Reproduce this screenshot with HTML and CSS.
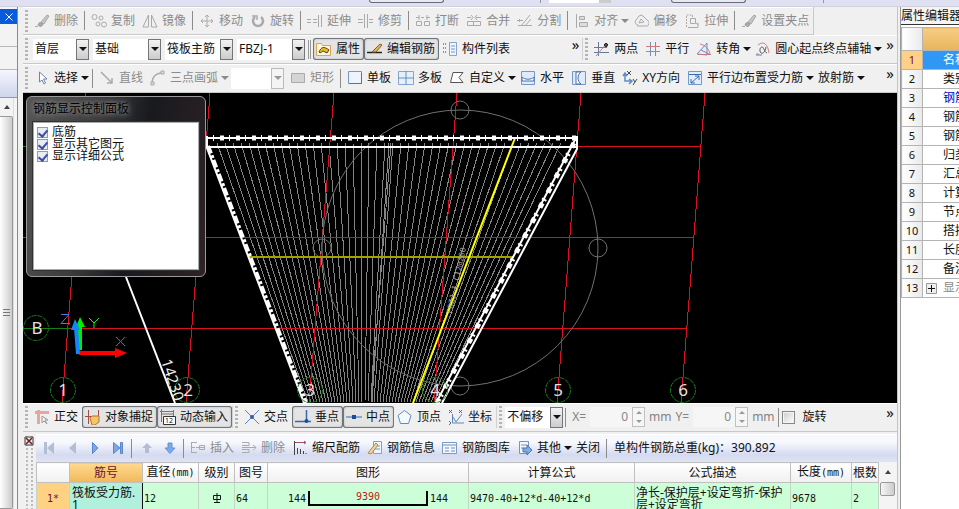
FILE: index.html
```html
<!DOCTYPE html>
<html lang="zh-CN">
<head>
<meta charset="utf-8">
<title>钢筋编辑</title>
<link rel="stylesheet" href="styles.css">
</head>
<body>
<svg class="sprite" aria-hidden="true">
  <symbol id="brush" viewBox="0 0 16 16"><path d="M1 13.500h3M7 9l6-7 2 1-5 8z" fill="#c4c4c4" stroke="#aaa"/><path d="M4 12c1-3 3-3 5-1-1 3-3 3-5 1z" fill="#aaa" stroke="#999"/></symbol>
  <symbol id="copy" viewBox="0 0 16 16"><circle cx="3.500" cy="4" r="2.500"/><circle cx="10" cy="5" r="2"/><circle cx="7" cy="11" r="2"/><circle cx="13" cy="11.500" r="2.500"/></symbol>
  <symbol id="mirror" viewBox="0 0 16 16"><path d="M6.500 2v12H1zM9.500 2v12H15z"/></symbol>
  <symbol id="move" viewBox="0 0 16 16"><path d="M8 2v12M2 8h12M6 4l2-2 2 2M6 12l2 2 2-2M4 6L2 8l2 2M12 6l2 2-2 2"/></symbol>
  <symbol id="rotate" viewBox="0 0 16 16"><path d="M11 4a5 5 0 1 1-6 0" stroke-width="2.500"/><path d="M2 3h5v4" stroke-width="1.500"/></symbol>
  <symbol id="extend" viewBox="0 0 16 16"><path d="M0 6.500h4M0 9.500h4M6 6.500h4M6 9.500h4M11.500 2v12M14.500 2v12"/></symbol>
  <symbol id="trim" viewBox="0 0 16 16"><path d="M0 6.500h5M0 9.500h5M11 6.500h4M11 9.500h4M6.500 1v14M9.500 1v14"/></symbol>
  <symbol id="break" viewBox="0 0 16 16"><path d="M1 4.500h3M6 4.500h3M11 4.500h4M1.500 8.500h5v4h-5zM9.500 8.500h5v4h-5zM4 2v5M12 2v5"/></symbol>
  <symbol id="merge" viewBox="0 0 16 16"><path d="M1 4.500h4M10 4.500h5M1.500 8.500h6v4h-6zM7.500 8.500h7v4h-7zM5 2l2 2.500L5 7M11 2L9 4.500 11 7"/></symbol>
  <symbol id="split" viewBox="0 0 16 16"><path d="M0 7.500h6M1 12.500h14M4 13l9-11M8 13l6-7M2.500 6v3"/></symbol>
  <symbol id="align" viewBox="0 0 16 16"><path d="M2.500 1v14M5.500 3.500h5v3h-5zM5.500 9.500h8v4h-8z" fill="#ddd"/></symbol>
  <symbol id="offset" viewBox="0 0 16 16"><path d="M5 12a3 3 0 0 1-2-5l3-4a3 3 0 0 1 4 0l4 4a3 3 0 0 1-2 6H4M6 10l2-4 3 3z"/></symbol>
  <symbol id="stretch" viewBox="0 0 16 16"><path d="M2.500 14V2h6v3" stroke-dasharray="2 1"/><path d="M4 14.500h10v-5M6.500 5.500h5v5h-5zM12 10l2 2"/></symbol>
  <symbol id="props" viewBox="0 0 16 16"><path d="M.5 2.500h5l1 2h8v10H.5z" fill="#fff7df" stroke="#e0a24d"/><path d="M3 11c2-5 5-6 10-2l-2 3-4-2-3 2z" fill="#e8ba26" stroke="#514421"/></symbol>
  <symbol id="pen" viewBox="0 0 16 16"><path d="M0 11.500h15" stroke="#222" stroke-width="1.500"/><path d="M5 11l8-8 2 1-6 7z" fill="#e5b64e" stroke="#7c6328"/></symbol>
  <symbol id="list" viewBox="0 0 16 16"><path d="M1 3h4M1 7h4M1 11h4" stroke="#7599c5" stroke-width="2" stroke-dasharray="1 1"/><path d="M7.500 1.500h7v13h-7z" fill="#edf5ff" stroke="#88a4ca"/><path d="M9 5h4M9 8h4M9 11h4" stroke="#7599c5"/></symbol>
  <symbol id="twopt" viewBox="0 0 16 16"><path d="M4.500 1v14M0 11.500h15M0 6.500h13" stroke="#66789a"/><path d="M2 15L13 2" stroke="#c2868e"/><circle cx="12" cy="4" r="1.500" fill="#596b8d"/></symbol>
  <symbol id="parallel" viewBox="0 0 16 16"><path d="M5.500 1v14M10.500 1v14" stroke="#758db8"/><path d="M1 5.500h14M1 10.500h14" stroke="#cb777b"/></symbol>
  <symbol id="angle" viewBox="0 0 16 16"><path d="M1 13L11 2v12zM5 9l8 4" fill="#e6ebfa" stroke="#748abc"/><path d="M4 3c5 1 9 5 10 10M2 13.500h13" stroke="#c97986"/></symbol>
  <symbol id="arcaxis" viewBox="0 0 16 16"><path d="M3 4c6-5 10 0 11 8M1 13h3" stroke="#d27d82"/><path d="M11 6c-1 5-3 7-5 6-2-2-1-6 1-6s2 5 5 6" stroke="#555"/><path d="M1 14h6" stroke="#6482ae"/></symbol>
  <symbol id="cursor" viewBox="0 0 16 16"><path d="M5.500 2v10l2.500-2 2 4 1.500-1-2-4H13z" fill="#fff" stroke="#7182ab"/></symbol>
  <symbol id="line" viewBox="0 0 16 16"><path d="M2 2l11 11M13 8v5H8" stroke-width="1.500"/></symbol>
  <symbol id="arc" viewBox="0 0 16 16"><path d="M2 14C2 7 6 3 12 3" stroke-width="1.500"/><path d="M1 12h3v3H1zM11 1h3v3h-3z" fill="#ddd"/></symbol>
  <symbol id="rect" viewBox="0 0 16 16"><path d="M1.500 3.500h13v9h-13z" fill="#d4d4d4"/></symbol>
  <symbol id="slab" viewBox="0 0 16 16"><path d="M1.500 1.500h13v12h-13z" fill="#edf4ff" stroke="#7796ca"/><path d="M2 13.500h12.500V3" stroke="#4c74b4"/></symbol>
  <symbol id="slabs" viewBox="0 0 16 16"><path d="M.5 1.500h15v13H.5z" fill="#e6f0fd" stroke="#86a6d2"/><path d="M8 1v14M0 8h16" stroke="#668fbd"/></symbol>
  <symbol id="custom" viewBox="0 0 16 16"><path d="M4 2.500h10l-4 5 4 5H1.500z" fill="#fff" stroke="#555"/></symbol>
  <symbol id="horiz" viewBox="0 0 16 16"><path d="M1.500 1.500h13v13h-13z" fill="#dfebfb" stroke="#7299cb"/><path d="M2 7c3 3 9 3 12 0v4H2z" fill="#fff" stroke="#496ea8"/></symbol>
  <symbol id="vert" viewBox="0 0 16 16"><path d="M1.500 1.500h13v13h-13z" fill="#dfebfb" stroke="#7299cb"/><path d="M10 2c-4 3-4 9 0 12H5V2z" fill="#fff" stroke="#496ea8"/></symbol>
  <symbol id="xy" viewBox="0 0 16 16"><path d="M3 4v7h6M1 6l2-3 2 3M7 9l3 2-3 3" stroke="#598bd0" stroke-width="1.500"/><path d="M5 1l4 4M9 1L5 5M11 9l2 3 2-3M13 12l-2 3" stroke="#444"/></symbol>
  <symbol id="edge" viewBox="0 0 16 16"><path d="M1.500 1.500h13v13h-13z" fill="#e2edfc" stroke="#7299cb"/><path d="M2 4.500h12M4 13L12 6M4 9v4h4M8 6h4v4" stroke="#3c69aa"/></symbol>
  <symbol id="ortho" viewBox="0 0 16 16"><path d="M1 3.500h14M4.500 1v14" stroke="#e8a5a5" stroke-width="3"/><path d="M8 7v7l2-2 3 3-2-4h3z" fill="#eee" stroke="#999"/></symbol>
  <symbol id="snap" viewBox="0 0 16 16"><path d="M3.500 1v14M13.500 1v7M0 7.500h7" stroke="#a64a4a"/><path d="M5 9l2-2h7v6l-4 3H7z" fill="#f2c567" stroke="#ae7733"/></symbol>
  <symbol id="dynin" viewBox="0 0 16 16"><path d="M0 2.500h14M1.500 0v13M13.500 1v6M1 5h13" stroke="#777"/><path d="M3.500 7.500h12v8h-12z" fill="#fff" stroke="#333"/><text x="5" y="14" font-size="7" fill="#111" stroke="none">12</text></symbol>
  <symbol id="cross" viewBox="0 0 16 16"><path d="M1 1l14 14M15 1L1 15" stroke="#5d87c0"/><circle cx="8" cy="8" r="2" fill="#365f9d" stroke="none"/></symbol>
  <symbol id="perp" viewBox="0 0 16 16"><path d="M0 12.500h16M11.500 1v11" stroke="#356ab3" stroke-width="1.500"/><circle cx="11.500" cy="12" r="2" fill="#174e9b" stroke="none"/></symbol>
  <symbol id="mid" viewBox="0 0 16 16"><path d="M0 8h16" stroke="#356ab3"/><path d="M6 6h4v4H6z" fill="#174e9b" stroke="none"/></symbol>
  <symbol id="vertex" viewBox="0 0 16 16"><path d="M7.500 1.500l6.500 5-2.500 8h-8l-2.500-8z" fill="#f5faff" stroke="#5a8bca"/></symbol>
  <symbol id="coord" viewBox="0 0 16 16"><path d="M4.500 5v9H16M5 8l3 5 6-8" stroke="#5d87c0"/><path d="M1 1l3 3M4 1L1 4M11 1l3 3M14 1l-3 3M1 12l2 2-2 2" stroke="#666"/></symbol>
  <symbol id="insert" viewBox="0 0 16 16"><path d="M1 2.500h6M1 7.500h4M1 12.500h6M1.500 2v11M6 7.500h9M9.500 5.500h5v4h-5z"/></symbol>
  <symbol id="remove" viewBox="0 0 16 16"><path d="M1 2.500h7v3H1M1 12.500h7v-3H1M1 7.500h14M12 5l3 2.500-3 3"/></symbol>
  <symbol id="scale" viewBox="0 0 16 16"><path d="M3 2.500h11M12 1l2 1.500L12 4" stroke="#a05262"/><path d="M2.500 1v14M5.500 8v6M8.500 9v5M11.500 11v3M14 13v1" stroke="#444"/></symbol>
  <symbol id="info" viewBox="0 0 16 16"><path d="M6.500 1.500h8v12h-8z" fill="#edf5ff" stroke="#8b9fbe"/><path d="M8 6h5M8 9h5" stroke="#7d97bd"/><path d="M1 13L9 3l2 2-7 9z" fill="#f1d699" stroke="#a98c50"/></symbol>
  <symbol id="gallery" viewBox="0 0 16 16"><path d="M.5 2.500h14v11H.5z" fill="#f3f8ff" stroke="#7b9ac4"/><path d="M1 5h13M3 8h4M9 8h4M3 11h4M9 11h4" stroke="#708eb9"/></symbol>
  <symbol id="other" viewBox="0 0 16 16"><path d="M2.500 1.500h9v12h-9z" fill="#f3f8ff" stroke="#7892b8"/><path d="M4 5h6M4 8h3" stroke="#7892b8"/><path d="M6 8h4V5l5 5-5 5v-3H6z" fill="#80abe5" stroke="#4774b2"/></symbol>
  <symbol id="first" viewBox="0 0 16 16"><path d="M3 2h3v12H3zM13 2v12L6 8z" fill="#b2bed5" stroke="none"/></symbol>
  <symbol id="prev" viewBox="0 0 16 16"><path d="M12 2v12L5 8z" fill="#b2bed5" stroke="none"/></symbol>
  <symbol id="next" viewBox="0 0 16 16"><path d="M5.500 2.500v11L11 8z" fill="#7aa7ed" stroke="#5a85cf"/></symbol>
  <symbol id="last" viewBox="0 0 16 16"><path d="M3.500 2.500v11L10 8zM10.500 2.500h2v11h-2z" fill="#7aa7ed" stroke="#5a85cf"/></symbol>
  <symbol id="up" viewBox="0 0 16 16"><path d="M8 3l5 5h-3v5H6V8H3z" fill="#b2bed5" stroke="none"/></symbol>
  <symbol id="down" viewBox="0 0 16 16"><path d="M8 13.500L3 8h3V3h4v5h3z" fill="#7aa7ed" stroke="#6890d6"/></symbol>
</svg>

<header class="topbar"><i class="stub"></i><i class="tick"></i><i class="field"></i><i class="stub"></i><i class="tick"></i></header>

<main class="workspace">
  <aside class="left">
    <button class="close" aria-label="关闭面板"><svg viewBox="0 0 10 10"><path d="M1.500 1.500l7 7M8.500 1.500l-7 7" stroke="#fff"/></svg></button>
    <div class="cell"></div><div class="cell"></div><div class="band"></div>
    <div class="scroll"><span class="tri-up"></span><div class="thumb"><i></i></div></div>
  </aside>

  <section class="center">
    <div class="bar short disabled">
      <span class="grip"></span>
      <button><svg><use href="#brush"/></svg>删除</button><i class="sep"></i>
      <button><svg><use href="#copy"/></svg>复制</button>
      <button><svg><use href="#mirror"/></svg>镜像</button><i class="sep"></i>
      <button><svg><use href="#move"/></svg>移动</button>
      <button><svg><use href="#rotate"/></svg>旋转</button><i class="sep"></i>
      <button><svg><use href="#extend"/></svg>延伸</button>
      <button><svg><use href="#trim"/></svg>修剪</button><i class="sep"></i>
      <button><svg><use href="#break"/></svg>打断</button>
      <button><svg><use href="#merge"/></svg>合并</button>
      <button><svg><use href="#split"/></svg>分割</button><i class="sep"></i>
      <button><svg><use href="#align"/></svg>对齐<i class="drop"></i></button>
      <button><svg><use href="#offset"/></svg>偏移</button>
      <button><svg><use href="#stretch"/></svg>拉伸</button><i class="sep"></i>
      <button><svg><use href="#brush"/></svg>设置夹点</button>
    </div>

    <div class="bar">
      <div class="group grow">
        <span class="grip"></span>
        <span class="combos">
          <span class="combo small"><select aria-label="楼层"><option>首层</option></select><i></i></span>
          <span class="combo"><select aria-label="构件类型"><option>基础</option></select><i></i></span>
          <span class="combo"><select aria-label="构件"><option>筏板主筋</option></select><i></i></span>
          <span class="combo"><select aria-label="名称"><option>FBZJ-1</option></select><i></i></span>
        </span>
        <i class="sep wide"></i>
        <button class="on"><svg><use href="#props"/></svg>属性</button>
        <button class="on"><svg><use href="#pen"/></svg>编辑钢筋</button>
        <button><svg><use href="#list"/></svg>构件列表</button>
        <button class="more">»</button>
      </div>
      <div class="group divided axis">
        <span class="grip"></span>
        <button><svg><use href="#twopt"/></svg>两点</button>
        <button><svg><use href="#parallel"/></svg>平行</button>
        <button><svg><use href="#angle"/></svg>转角<i class="drop"></i></button>
        <button><svg><use href="#arcaxis"/></svg>圆心起点终点辅轴<i class="drop"></i></button>
        <button class="more">»</button>
      </div>
    </div>

    <div class="bar">
      <span class="grip"></span>
      <button><svg><use href="#cursor"/></svg>选择<i class="drop"></i></button><i class="sep"></i>
      <button class="off"><svg><use href="#line"/></svg>直线</button>
      <button class="off"><svg><use href="#arc"/></svg>三点画弧<i class="drop"></i></button>
      <span class="combo tiny"><select aria-label="画法" disabled><option></option></select><i></i></span>
      <button class="off"><svg><use href="#rect"/></svg>矩形</button><i class="sep"></i>
      <button><svg><use href="#slab"/></svg>单板</button>
      <button><svg><use href="#slabs"/></svg>多板</button>
      <button><svg><use href="#custom"/></svg>自定义<i class="drop"></i></button>
      <button><svg><use href="#horiz"/></svg>水平</button>
      <button><svg><use href="#vert"/></svg>垂直</button>
      <button><svg><use href="#xy"/></svg>XY方向</button>
      <button><svg><use href="#edge"/></svg>平行边布置受力筋<i class="drop"></i></button>
      <button>放射筋<i class="drop"></i></button>
      <button class="more">»</button>
    </div>

    <div class="canvas">
      <svg class="drawing" viewBox="23 93 874 310" preserveAspectRatio="xMinYMin slice" fill="none">
        <g stroke="#858585" shape-rendering="crispEdges">
          <path d="M217 143l91 259M225 143l86 259M233 143l81 259M241 143l76 259M249 143l71 259M257 143l66 259M265 143l61 259M273 143l56 259M281 143l51 259M289 143l46 259M297 143l41 259M305 143l36 259M313 143l31 259M321 143l26 259M329 143l21 259M337 143l16 259M345 143l11 259M353 143l6 259M361 143l1 259M369 143l-4 259M377 143l-9 259M385 143l-14 259M393 143l-19 259M401 143l-24 259M409 143l-29 259M417 143l-34 259M425 143l-39 259M433 143l-44 259M441 143l-49 259M449 143l-54 259M457 143l-59 259M465 143l-64 259M473 143l-69 259M481 143l-74 259M489 143l-79 259M497 143l-84 259M505 143l-89 259M513 143l-94 259M521 143l-99 259M529 143l-104 259M537 143l-109 259M545 143l-114 259M553 143l-119 259M561 143l-124 259M389 143l-17 259M391 143l-20 259"/>
        </g>
        <path d="M86 93L62 403M210 93L186 403M334 93L309 403M457 93L434 403M581 93L557 403M705 93L681 403" stroke="#d81020" shape-rendering="crispEdges"/>
        <g fill="#d81020"><rect x="577" y="146" width="124" height="1"/><rect x="23" y="237" width="671" height="1"/><rect x="70" y="328" width="616" height="1"/></g>
        <path d="M23 328.500H70M23 146.500H30M23 237.500H30" stroke="#158015"/>
        <g stroke="#707070"><circle cx="460" cy="248" r="138"/><circle cx="460" cy="110" r="9"/><circle cx="598" cy="248" r="9"/><circle cx="460" cy="386" r="9"/><circle cx="322" cy="248" r="9"/></g>
        <path d="M249 257H513" stroke="#a2a200" stroke-width="2"/>
        <path d="M515 138L413 403" stroke="#ff0" stroke-width="2"/>
        <g stroke="#fff">
          <path d="M207 138H577M207 147H577" stroke-width="2"/>
          <path d="M220 138H577" stroke-width="5" stroke-dasharray="4 12"/>
          <path d="M213 138H577" stroke-width="6" stroke-dasharray="1 15"/>
          <path d="M207 136V148L304 403" stroke-width="2"/>
          <path d="M208 146L306 403" stroke-width="4" stroke-dasharray="8 2 3 2"/>
          <path d="M576 138L436 403M577 136V149L442 403" stroke-width="2"/>
          <path d="M574 143L437 403" stroke-width="5" stroke-dasharray="5 7 2 3"/>
          <path d="M126 277L175 403" stroke-width="2"/>
        </g>
        <g stroke="#1b7a1b" stroke-dasharray="5 1"><circle cx="63" cy="390" r="12.500"/><circle cx="187" cy="390" r="12.500"/><circle cx="310" cy="390" r="12.500"/><circle cx="435" cy="390" r="12.500"/><circle cx="558" cy="390" r="12.500"/><circle cx="683" cy="390" r="12.500"/><circle cx="36" cy="328" r="12.500"/></g>
        <g class="marks"><text x="63" y="396">1</text><text x="188" y="396">2</text><text x="310" y="396">3</text><text x="435" y="396">4</text><text x="558" y="396">5</text><text x="683" y="396">6</text><text x="37" y="334">B</text></g>
        <text class="dim" transform="translate(161 361) rotate(72)">14230</text>
        <text class="note" transform="translate(452 314) rotate(-78)">FBZJ-1 C12@200</text>
        <path d="M80 350V326" stroke="#0e0" stroke-width="4"/><path d="M80 317l5 10h-9z" fill="#0e0"/>
        <path d="M79 353h38" stroke="#f00" stroke-width="4"/><path d="M115 348l12 5-12 5z" fill="#f00"/>
        <path d="M78 354L76 328" stroke="#1286ff" stroke-width="4"/><path d="M75 319l5 11h-9z" fill="#1286ff"/>
        <path d="M61 314.500h8l-8 9h9" stroke="#4878f0"/><path d="M89 318l5 5 5-5M94 323v5" stroke="#2e2"/><path d="M116 337l9 9M125 337l-9 9" stroke="#f22"/>
      </svg>
      <form class="float">
        <h2>钢筋显示控制面板</h2>
        <div class="checks">
          <label><input type="checkbox" checked>底筋</label>
          <label><input type="checkbox" checked>显示其它图元</label>
          <label><input type="checkbox" checked>显示详细公式</label>
        </div>
      </form>
    </div>

    <div class="bar">
      <div class="group">
        <span class="grip"></span>
        <button><svg><use href="#ortho"/></svg>正交</button>
        <button class="on"><svg><use href="#snap"/></svg>对象捕捉</button>
        <button class="on"><svg><use href="#dynin"/></svg>动态输入</button>
      </div>
      <div class="group divided">
        <span class="grip"></span>
        <button><svg><use href="#cross"/></svg>交点</button>
        <button class="on"><svg><use href="#perp"/></svg>垂点</button>
        <button class="on"><svg><use href="#mid"/></svg>中点</button>
        <button><svg><use href="#vertex"/></svg>顶点</button>
        <button><svg><use href="#coord"/></svg>坐标</button>
      </div>
      <div class="group divided grow">
        <span class="grip"></span>
        <span class="combo offset"><select aria-label="偏移方式"><option>不偏移</option></select><i></i></span><i class="sep"></i>
        <label class="spin">X=<span><input type="text" value="0" disabled><i></i></span>mm</label>
        <label class="spin">Y=<span><input type="text" value="0" disabled><i></i></span>mm</label>
        <i class="sep"></i>
        <label class="turn"><input type="checkbox">旋转</label>
        <button class="more">»</button>
      </div>
    </div>

    <div class="dock">
      <div class="handle"><button aria-label="关闭"><svg viewBox="0 0 10 10"><path d="M1 1h8v8H1z" fill="#eee" stroke="#433"/><path d="M2 2l6 6M8 2L2 8" stroke="#622" stroke-width="1.500"/></svg></button></div>
      <div class="sheet">
        <div class="bar blue">
          <button class="nav" aria-label="首条"><svg><use href="#first"/></svg></button>
          <button class="nav" aria-label="上一条"><svg><use href="#prev"/></svg></button>
          <button class="nav" aria-label="下一条"><svg><use href="#next"/></svg></button>
          <button class="nav" aria-label="末条"><svg><use href="#last"/></svg></button><i class="sep"></i>
          <button class="nav" aria-label="上移"><svg><use href="#up"/></svg></button>
          <button class="nav" aria-label="下移"><svg><use href="#down"/></svg></button><i class="sep"></i>
          <button class="off"><svg><use href="#insert"/></svg>插入</button>
          <button class="off"><svg><use href="#remove"/></svg>删除</button>
          <button><svg><use href="#scale"/></svg>缩尺配筋</button>
          <button><svg><use href="#info"/></svg>钢筋信息</button>
          <button><svg><use href="#gallery"/></svg>钢筋图库</button>
          <button><svg><use href="#other"/></svg>其他<i class="drop"></i></button>
          <button>关闭</button><i class="sep"></i>
          <output>单构件钢筋总重(kg)：390.892</output>
        </div>
        <div class="gridrow">
          <table class="bars">
            <colgroup><col class="c-no"><col class="c-name"><col class="c-dia"><col class="c-lv"><col class="c-fig"><col class="c-shape"><col class="c-calc"><col class="c-desc"><col class="c-len"><col class="c-num"></colgroup>
            <thead><tr><th></th><th class="hot">筋号</th><th>直径<span>(mm)</span></th><th>级别</th><th>图号</th><th>图形</th><th>计算公式</th><th>公式描述</th><th>长度<span>(mm)</span></th><th>根数</th></tr></thead>
            <tbody><tr>
              <th class="hot"><span>1*</span></th><td class="name">筏板受力筋.<br>1</td><td><span>12</span></td>
              <td class="mid"><svg class="grade" viewBox="0 0 10 10"><path d="M5 0v9M1.500 2.500h7v4h-7zM2 9.500h6" fill="none" stroke="#111"/></svg></td>
              <td><span>64</span></td>
              <td><div class="shape"><span>144</span><b>9390</b><span>144</span></div></td>
              <td><span>9470-40+12*d-40+12*d</span></td>
              <td>净长-保护层+设定弯折-保护层+设定弯折</td><td><span>9678</span></td><td><span>2</span></td>
            </tr></tbody>
          </table>
          <div class="vscroll"><span class="tri-up"></span><i></i></div>
        </div>
      </div>
    </div>
  </section>

  <aside class="right">
    <h2>属性编辑器</h2>
    <table class="attrs">
      <thead><tr><th></th><th class="hot"></th></tr></thead>
      <tbody>
        <tr class="sel"><th>1</th><td>名称</td></tr>
        <tr><th>2</th><td>类别</td></tr>
        <tr class="key"><th>3</th><td>钢筋</td></tr>
        <tr><th>4</th><td>钢筋</td></tr>
        <tr><th>5</th><td>钢筋</td></tr>
        <tr><th>6</th><td>归类</td></tr>
        <tr><th>7</th><td>汇总</td></tr>
        <tr><th>8</th><td>计算</td></tr>
        <tr><th>9</th><td>节点</td></tr>
        <tr><th>10</th><td>搭接</td></tr>
        <tr><th>11</th><td>长度</td></tr>
        <tr><th>12</th><td>备注</td></tr>
        <tr class="fold"><th>13</th><td><button aria-label="展开"><svg viewBox="0 0 11 11"><path d="M.5.5h10v10H.5z" fill="#eee" stroke="#999"/><path d="M5.500 2v7M2 5.500h7" stroke="#111"/></svg></button>显示</td></tr>
      </tbody>
    </table>
  </aside>
</main>
</body>
</html>
```
FILE: styles.css
```css
* { box-sizing: border-box; }
body {
  margin: 0;
  height: 100vh;
  display: flex;
  flex-direction: column;
  overflow: hidden;
  background: #f0f0f0;
  color: #111;
  font: 12px/14px "Noto Sans", "Noto Sans CJK SC", sans-serif;
}
.sprite { position: absolute; width: 0; height: 0; }
h2 { margin: 0; font-size: 12px; font-weight: normal; }
button, select, input { font: inherit; color: inherit; }
button { border: 0; background: none; padding: 0; }

.topbar {
  flex: 0 0 7px;
  display: flex;
  padding-left: 369px;
  background: #dfe1f2;
  border-bottom: 1px solid #d0d1dc;
  overflow: hidden;
}
.stub { width: 75px; height: 3px; border: 1px solid #666c7c; border-top: 0; border-radius: 0 0 4px 4px; background: #e8e9f0; }
.tick { width: 1px; height: 3px; background: #999; margin: 0 8px 0 96px; }
.field { width: 62px; height: 3px; background: #fff; border-right: 12px solid #ccc; margin-right: 60px; }
.topbar .tick:last-child { margin-left: 77px; }

.workspace { flex: 1; min-height: 0; display: flex; }
.left {
  flex: 0 0 18px;
  display: flex;
  flex-direction: column;
  padding-top: 2px;
  border-right: 1px solid #8a8a8a;
  background: #f4f4f4;
}
.close { height: 15px; background: #0a5bdc; text-align: right; }
.close svg { width: 10px; height: 10px; display: block; margin: 0 3px 0 auto; }
.cell { height: 23px; border-bottom: 1px solid #b9b9b9; background: #f3f3f3; }
.band { height: 28px; background: linear-gradient(#f5f6fd, #cfd5ed); border-bottom: 1px solid #999; }
.scroll { flex: 1; display: flex; flex-direction: column; margin-right: 3px; border-right: 1px solid #ddd; background: #f3f3f3; }
.tri-up { border: 3px solid transparent; border-top: 0; border-bottom: 4px solid #444; width: 0; margin: 7px 0 7px 4px; }
.thumb { flex: 1; display: grid; place-items: center; border: 1px solid #999; border-left: 0; border-radius: 0 2px 2px 0; background: linear-gradient(90deg, #fff, #ccc); }
.thumb i { width: 7px; height: 8px; background: repeating-linear-gradient(#777 0 1px, transparent 1px 3px); }

.center { flex: 1; min-width: 0; margin-left: 5px; display: flex; flex-direction: column; border-right: 1px solid #c4c4c4; }
.bar, .group { display: flex; align-items: center; }
.bar {
  flex: 0 0 29px;
  padding-left: 2px;
  white-space: nowrap;
  background: #f0f0f0;
  border-bottom: 1px solid #c9c9c9;
  box-shadow: inset 0 1px #fff;
}
.bar.short { flex-basis: 28px; align-self: flex-start; border-right: 1px solid #c9c9c9; }
.bar button { flex: none; display: flex; align-items: center; height: 22px; padding: 0 4px 0 3px; }
.bar button svg { width: 16px; height: 16px; margin-right: 4px; fill: none; stroke: currentColor; }
.bar.disabled, .off { color: #8b8b8b; }
.disabled svg, .off svg { color: #aaa; }
.grip { flex: none; width: 3px; height: 22px; margin-right: 3px; background: repeating-linear-gradient(#b4b4b4 0 2px, transparent 2px 4px); }
.sep { flex: none; width: 1px; height: 19px; margin: 0 3px 0 2px; background: #8c8c8c; }
.sep.wide { width: 3px; border: solid #999; border-width: 0 1px; background: none; margin-left: 3px; margin-right: 2px; }
.drop { border: 4px solid transparent; border-top-color: currentColor; border-bottom: 0; margin: 0 -3px 0 3px; }
.bar .on { border-radius: 3px; background: #e4e4e4; box-shadow: inset 0 0 0 1px #70747b, inset 0 0 3px #888; }
.bar .more { margin-left: auto; padding: 0 3px 11px; font-size: 15px; line-height: 10px; }
.grow { flex: 1; }
.divided { border-left: 1px solid #d0d0d0; padding-left: 2px; }
.axis { flex: 0 0 313px; }

.combos { display: flex; gap: 4px; margin-left: 2px; }
.combo { flex: none; display: flex; width: 68px; height: 21px; background: #fff; }
.combo.small { width: 56px; }
.combo.offset { width: 58px; }
.combo.tiny { width: 53px; margin: 0 3px 0 1px; color: #999; }
.combo select { flex: 1; min-width: 0; appearance: none; border: 0; padding: 0 0 0 2px; margin: 0; background: none; border-radius: 0; }
.combo i { flex: 0 0 13px; display: grid; place-items: center; border: 1px solid #73777c; background: linear-gradient(#f2f2f2, #ccc); pointer-events: none; }
.combo.tiny i { border-color: #bbb; background: #f4f4f4; }
.combo i::after { content: ""; border: 4px solid transparent; border-top-color: currentColor; border-bottom: 0; }

.spin { display: flex; align-items: center; gap: 4px; margin: 0 1px 0 3px; color: #838383; }
.spin span { display: flex; width: 55px; height: 20px; background: #f6f6f6; }
.spin input { flex: 1; min-width: 0; border: 0; padding: 0 4px; background: none; text-align: right; color: #888; }
.spin i { width: 13px; display: flex; flex-direction: column; justify-content: space-around; align-items: center; border: 1px solid #c0c0c0; }
.spin i::before { content: ""; border: 3px solid transparent; border-top: 0; border-bottom-color: #999; }
.spin i::after { content: ""; border: 3px solid transparent; border-bottom: 0; border-top-color: #999; }
.turn { display: flex; align-items: center; gap: 8px; }
.turn input { appearance: none; width: 13px; height: 13px; margin: 0; border: 1px solid #888; background: linear-gradient(135deg, #ccc, #fff); box-shadow: inset 0 0 0 1px #f4f4f4; }

.canvas { flex: 1; min-height: 0; position: relative; overflow: hidden; background: #000; }
.drawing { display: block; width: 100%; height: 100%; }
.marks { fill: #eadede; font: 17px "Noto Sans", sans-serif; text-anchor: middle; }
.dim { fill: #eee; font: 15px "Noto Sans", sans-serif; }
.note { fill: #a8a8a8; font: 8px "DejaVu Sans Mono", monospace; }

.float {
  position: absolute;
  left: 3px;
  top: 3px;
  width: 180px;
  padding: 0 6px 6px;
  border: 1px solid #9a9a9a;
  border-radius: 6px;
  background: linear-gradient(100deg, #555 0%, #3c3c3e 35%, #191a1e 60%, #2e2226 100%);
}
.float h2 { height: 25px; line-height: 23px; color: #000; text-shadow: 0 0 5px #999, 0 0 8px #888; }
.checks { height: 148px; padding: 3px; border: 1px solid #aaa; outline: 1px solid #333; background: #fff; }
.checks label { display: flex; align-items: center; gap: 4px; height: 12px; line-height: 12px; }
.checks input { appearance: none; width: 11px; height: 11px; margin: 0; border: 1px solid #8e9bb0; background: #e6ebf5; display: grid; place-items: center; }
.checks input::after { content: ""; width: 4px; height: 7px; border: solid #3a509c; border-width: 0 2px 2px 0; transform: rotate(40deg); }

.dock { flex: 0 0 77px; display: flex; padding-top: 2px; overflow: hidden; }
.handle { flex: 0 0 13px; padding: 2px 2px 0 1px; background: repeating-linear-gradient(#f0f0f0 0 2px, transparent 2px 4px), repeating-linear-gradient(90deg, #f0f0f0 0 3px, #bbb 3px 5px); }
.handle button, .handle svg { display: block; width: 10px; height: 10px; }
.sheet { flex: 1; min-width: 0; }
.bar.blue { height: 28px; padding-left: 1px; border: 0; background: linear-gradient(#f7f8fd 0 30%, #d5daf0 75%, #dfe3f5); }
.bar.blue .nav { width: 23px; padding: 0; justify-content: center; }
.bar.blue .nav svg { margin: 0; }
.bar.blue .sep { margin-right: 3px; }
.bar.blue output { margin-left: 4px; }

.gridrow { display: flex; }
.bars { flex: 1; min-width: 0; table-layout: fixed; border-collapse: collapse; border: solid #888; border-width: 1px 0 0 1px; line-height: 12px; }
.bars span, .bars b { font: 10px/12px "DejaVu Sans Mono", monospace; }
.bars thead th { height: 20px; padding: 0; font-weight: normal; background: linear-gradient(#fff, #f0f0f0); border: 1px solid #c0c0c0; white-space: nowrap; overflow: hidden; }
.bars td, .bars tbody th { height: 32px; padding: 0 1px; border: 1px solid #c5d5c8; background: #ccffd8; overflow: hidden; }
.bars thead .hot { background: linear-gradient(#ffd98e, #f0b85c); color: #70102c; }
.bars tbody .hot { background: #ffd283; color: #70102c; }
.bars .name { background: #b0f0dc; border-right: 1px solid #111; padding-left: 2px; }
.mid { text-align: center; }
.grade { width: 10px; height: 10px; }
.shape { display: flex; justify-content: center; align-items: center; gap: 2px; }
.shape b { width: 120px; height: 15px; text-align: center; color: #c01818; border: solid #000; border-width: 0 2px 2px; }
.c-no { width: 33px; }
.c-name { width: 73px; }
.c-dia { width: 56px; }
.c-lv { width: 36px; }
.c-fig { width: 33px; }
.c-shape { width: 201px; }
.c-desc { width: 156px; }
.c-len { width: 61px; }
.c-num { width: 27px; }
.vscroll { flex: 0 0 18px; background: #f4f4f4; }
.vscroll .tri-up { display: block; margin: 8px 0 8px 6px; }
.vscroll i { display: block; width: 15px; height: 14px; margin-left: 1px; border: 1px solid #999; border-radius: 2px; background: linear-gradient(90deg, #f6f6f6, #ccc); }

.right { flex: 0 0 59px; margin-left: 2px; overflow: hidden; background: #fff; border-left: 1px solid #999; }
.right h2 { height: 18px; padding-top: 2px; border-bottom: 1px solid #333; white-space: nowrap; background: #f4f4f4; }
.attrs { width: 100px; margin-top: 2px; table-layout: fixed; border-collapse: collapse; }
.attrs th, .attrs td { height: 19px; padding: 0; border: 1px solid #b4b4b4; }
.attrs th { width: 21px; font-weight: normal; font-size: 11px; background: linear-gradient(90deg, #fff, #eaeaea); }
.attrs td { padding-left: 20px; }
.attrs thead th { height: 23px; }
.attrs thead .hot { width: auto; background: linear-gradient(#f6cd83, #e8b45c); }
.attrs .sel th { background: #ffd086; color: #70102c; }
.sel td { background: #3197f5; color: #fff; }
.key td { color: #00c; }
.attrs .fold td { padding-left: 3px; color: #888; white-space: nowrap; }
.fold button { margin-right: 6px; vertical-align: middle; }
.fold svg { display: block; width: 11px; height: 11px; }
```
